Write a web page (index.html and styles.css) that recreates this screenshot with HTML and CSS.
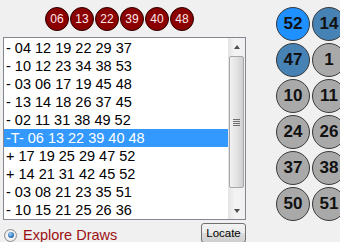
FILE: index.html
```html
<!DOCTYPE html>
<html>
	<head>
		<meta charset="utf-8" />
		<title>Draws</title>
		<link rel="stylesheet" href="styles.css">
	</head>

	<body>
		<div class="window">
			<div class="left">
				<div class="drawn">
					<span class="dball">06</span>
					<span class="dball">13</span>
					<span class="dball">22</span>
					<span class="dball">39</span>
					<span class="dball">40</span>
					<span class="dball">48</span>
				</div>
				<div class="listbox">
					<div class="rows">
						<div class="row">- 04 12 19 22 29 37</div>
						<div class="row">- 10 12 23 34 38 53</div>
						<div class="row">- 03 06 17 19 45 48</div>
						<div class="row">- 13 14 18 26 37 45</div>
						<div class="row">- 02 11 31 38 49 52</div>
						<div class="row selected">-T- 06 13 22 39 40 48</div>
						<div class="row">+ 17 19 25 29 47 52</div>
						<div class="row">+ 14 21 31 42 45 52</div>
						<div class="row">- 03 08 21 23 35 51</div>
						<div class="row">- 10 15 21 25 26 36</div>
					</div>
					<div class="scrollbar">
						<div class="sb-btn"><span class="arrow up"></span></div>
						<div class="sb-track">
							<div class="sb-thumb"><span class="grip"></span></div>
						</div>
						<div class="sb-btn"><span class="arrow down"></span></div>
					</div>
				</div>
				<div class="bottom">
					<label class="radio"><span class="radio-box"><span class="radio-dot"></span></span>Explore Draws</label>
					<button class="locate">Locate</button>
				</div>
			</div>
			<div class="grid">
				<span class="nball hot">52</span>
				<span class="nball warm">14</span>
				<span class="nball warm">47</span>
				<span class="nball">1</span>
				<span class="nball">10</span>
				<span class="nball">11</span>
				<span class="nball">24</span>
				<span class="nball">26</span>
				<span class="nball">37</span>
				<span class="nball">38</span>
				<span class="nball">50</span>
				<span class="nball">51</span>
			</div>
		</div>
	</body>
</html>
```

FILE: styles.css
```css
* {
	padding: 0px;
	margin: 0px;
	box-sizing: border-box;
}
html,
body {
	width: 340px;
	height: 242px;
	overflow: hidden;
	background-color: #f0f0f0;
	font-family: "Liberation Sans", Arial, sans-serif;
}
.window {
	display: flex;
	align-items: flex-start;
}
.left {
	width: 243px;
	margin-left: 3px;
	flex-shrink: 0;
}

/* winning numbers on top */
.drawn {
	display: flex;
	gap: 1px;
	padding-left: 42px;
	padding-top: 7px;
	margin-bottom: 6px;
}
.dball {
	width: 24px;
	height: 24px;
	border-radius: 50%;
	background-color: #8b0000;
	border: 1px solid #2a0000;
	color: #ffe8e8;
	font-size: 12px;
	line-height: 22px;
	text-align: center;
}

/* list of draws */
.listbox {
	display: flex;
	height: 183px;
	background-color: #fff;
	border: 1px solid #828790;
	overflow: hidden;
}
.rows {
	flex: 1;
	padding-top: 1px;
}
.row {
	height: 18px;
	line-height: 18px;
	padding-left: 2px;
	font-size: 14.5px;
	color: #000;
	white-space: nowrap;
}
.row.selected {
	background-color: #3399ff;
	color: #fff;
}
.scrollbar {
	width: 17px;
	flex-shrink: 0;
	display: flex;
	flex-direction: column;
	background: linear-gradient(to right, #e3e3e3, #f4f4f4 40%, #f0f0f0);
}
.sb-btn {
	height: 17px;
	display: flex;
	align-items: center;
	justify-content: center;
}
.arrow {
	width: 0;
	height: 0;
	border-left: 3.5px solid transparent;
	border-right: 3.5px solid transparent;
}
.arrow.up {
	border-bottom: 4px solid #4d4d4d;
}
.arrow.down {
	border-top: 4px solid #4d4d4d;
}
.sb-track {
	flex: 1;
	padding: 1px 1px 13px 1px;
}
.sb-thumb {
	height: 132px;
	border: 1px solid #a7a7a7;
	border-radius: 2px;
	background: linear-gradient(to right, #f1f1f1, #e4e4e4 50%, #cfcfcf);
	display: flex;
	align-items: center;
	justify-content: center;
}
.grip {
	width: 7px;
	height: 7px;
	background: repeating-linear-gradient(to bottom, #6f6f6f 0px, #6f6f6f 1px, transparent 1px, transparent 2px);
}

/* bottom bar */
.bottom {
	display: flex;
	justify-content: space-between;
	align-items: flex-start;
	margin-top: 3px;
}
.radio {
	display: flex;
	align-items: center;
	margin-top: 5px;
	font-size: 14.5px;
	color: #9b1111;
	line-height: 14px;
}
.radio-box {
	width: 13px;
	height: 13px;
	margin-left: 1px;
	margin-right: 6px;
	border-radius: 50%;
	border: 1px solid #8e8f8f;
	background: radial-gradient(circle, #ffffff 30%, #d4d4d4);
	display: flex;
	align-items: center;
	justify-content: center;
}
.radio-dot {
	width: 6px;
	height: 6px;
	border-radius: 50%;
	background: radial-gradient(circle at 40% 35%, #a6d3f7, #2b72b8 60%, #17487a);
}
.locate {
	width: 45px;
	height: 20px;
	border: 1px solid #707070;
	border-radius: 3px;
	background: linear-gradient(to bottom, #f2f2f2 0%, #ebebeb 50%, #dddddd 51%, #cfcfcf 100%);
	font-family: "Liberation Sans", Arial, sans-serif;
	font-size: 11.5px;
	color: #000;
}

/* number balls on the right */
.grid {
	display: grid;
	grid-template-columns: 34px 34px;
	grid-auto-rows: 34px;
	gap: 2px;
	margin-left: 30px;
	margin-top: 7px;
	flex-shrink: 0;
}
.nball {
	width: 34px;
	height: 34px;
	border-radius: 50%;
	background-color: #a9a9a9;
	border: 1px solid #3a3a3a;
	font-size: 17px;
	font-weight: bold;
	color: #111;
	line-height: 32px;
	text-align: center;
}
.nball.hot {
	background-color: #1e90ff;
}
.nball.warm {
	background-color: #4682b4;
}
```
